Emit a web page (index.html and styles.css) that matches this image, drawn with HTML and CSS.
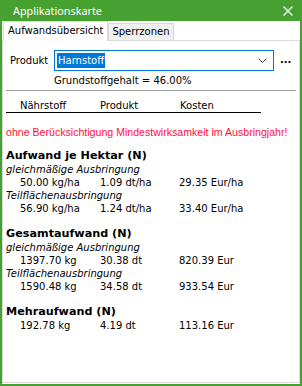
FILE: index.html
```html
<!DOCTYPE html>
<html>
<head>
<meta charset="utf-8">
<link rel="stylesheet" href="styles.css">
</head>
<body>
<div class="window">
  <div class="titlebar">
    <span class="title">Applikationskarte</span>
    <svg class="close" width="10" height="10" viewBox="0 0 10 10"><path d="M0.5 0.5 L9.5 9.5 M9.5 0.5 L0.5 9.5" stroke="#fff" stroke-width="1.2"/></svg>
  </div>
  <div class="tabs">
    <div class="tab active">Aufwandsübersicht</div>
    <div class="tab">Sperrzonen</div>
  </div>
  <div class="panel">
    <div class="product-row">
      <span class="label">Produkt</span>
      <div class="combo">
        <span class="selected">Harnstoff</span>
        <svg class="chevron" width="9" height="5" viewBox="0 0 9 5"><path d="M0.5 0.5 L4.5 4.5 L8.5 0.5" fill="none" stroke="#444" stroke-width="1"/></svg>
      </div>
      <span class="more">...</span>
    </div>
    <div class="content">Grundstoffgehalt = 46.00%</div>
    <div class="sep"></div>
    <div class="header">
      <span>Nährstoff</span><span>Produkt</span><span>Kosten</span>
    </div>
    <div class="warn">ohne Berücksichtigung Mindestwirksamkeit im Ausbringjahr!</div>

    <div class="section">
      <div class="heading">Aufwand je Hektar (N)</div>
      <div class="sub">gleichmäßige Ausbringung</div>
      <div class="vals"><span>50.00 kg/ha</span><span>1.09 dt/ha</span><span>29.35 Eur/ha</span></div>
      <div class="sub">Teilflächenausbringung</div>
      <div class="vals"><span>56.90 kg/ha</span><span>1.24 dt/ha</span><span>33.40 Eur/ha</span></div>
    </div>

    <div class="section">
      <div class="heading">Gesamtaufwand (N)</div>
      <div class="sub">gleichmäßige Ausbringung</div>
      <div class="vals"><span>1397.70 kg</span><span>30.38 dt</span><span>820.39 Eur</span></div>
      <div class="sub">Teilflächenausbringung</div>
      <div class="vals"><span>1590.48 kg</span><span>34.58 dt</span><span>933.54 Eur</span></div>
    </div>

    <div class="section">
      <div class="heading">Mehraufwand (N)</div>
      <div class="vals"><span>192.78 kg</span><span>4.19 dt</span><span>113.16 Eur</span></div>
    </div>
  </div>
</div>
</body>
</html>
```
FILE: styles.css
```css
* { box-sizing: border-box; }
html, body { margin: 0; padding: 0; background: #fff; }
body {
  font-family: "DejaVu Sans", Verdana, sans-serif;
  font-size: 10px;
  color: #000;
}
.window {
  width: 302px;
  height: 386px;
  border: 2px solid #47a131;
  border-top: 0;
  background: #fff;
  display: flex;
  flex-direction: column;
}
.titlebar {
  height: 21px;
  margin: 0 -2px;
  background: #47a131;
  display: flex;
  align-items: center;
  justify-content: space-between;
  padding: 0 9px 0 13px;
}
.title {
  color: #fff;
  font-family: "Noto Sans", "Open Sans", sans-serif;
  font-size: 10.8px;
  line-height: 21px;
}
.close { display: block; }
.tabs {
  height: 19px;
  display: flex;
  align-items: flex-end;
  padding-left: 1px;
}
.tab {
  height: 17px;
  line-height: 16px;
  padding: 0 3px;
  background: #f0f0f0;
  border: 1px solid #d9d9d9;
  border-bottom: 0;
  font-size: 10px;
}
.tab.active {
  height: 20px;
  line-height: 18px;
  background: #fff;
  border-color: #d9d9d9;
  margin-bottom: -1px;
  position: relative;
  z-index: 1;
  padding: 0 4px 0 4px;
}
.panel {
  flex: 1;
  border: 1px solid #d9d9d9;
  margin-bottom: 1px;
  padding: 9px 2px 0 2px;
}
.product-row {
  display: flex;
  align-items: center;
  height: 21px;
}
.label {
  width: 49px;
  padding-left: 5px;
}
.combo {
  width: 220px;
  height: 21px;
  border: 1px solid #0078d7;
  display: flex;
  align-items: center;
  justify-content: space-between;
  padding: 0 6px 0 2px;
}
.selected {
  background: #0078d7;
  color: #fff;
  line-height: 15px;
  padding: 0 1px;
}
.chevron { display: block; }
.more {
  margin-left: 6px;
  font-weight: bold;
  position: relative;
  top: -1px;
}
.content {
  padding-left: 49px;
  line-height: 13px;
  margin-top: 3px;
}
.sep {
  height: 1px;
  background: #a0a0a0;
  margin: 3px 1px 0 1px;
}
.header {
  display: grid;
  grid-template-columns: 80px 80px 80px;
  width: 255px;
  margin: 9px 0 0 1px;
  padding-left: 14px;
  line-height: 12px;
  border-bottom: 1px solid #000;
  height: 13px;
}
.warn {
  color: #ff1038;
  font-family: "Liberation Sans", Arial, sans-serif;
  font-size: 10.6px;
  white-space: nowrap;
  margin: 13px 0 0 1px;
  line-height: 13px;
}
.section { margin: 9px 0 0 1px; }
.section + .section { margin-top: 11px; }
.heading {
  font-weight: bold;
  font-size: 11.2px;
  line-height: 15px;
}
.sub {
  font-style: italic;
  line-height: 13px;
}
.vals {
  display: grid;
  grid-template-columns: 80px 79px 80px;
  padding-left: 14px;
  line-height: 13px;
}
```
